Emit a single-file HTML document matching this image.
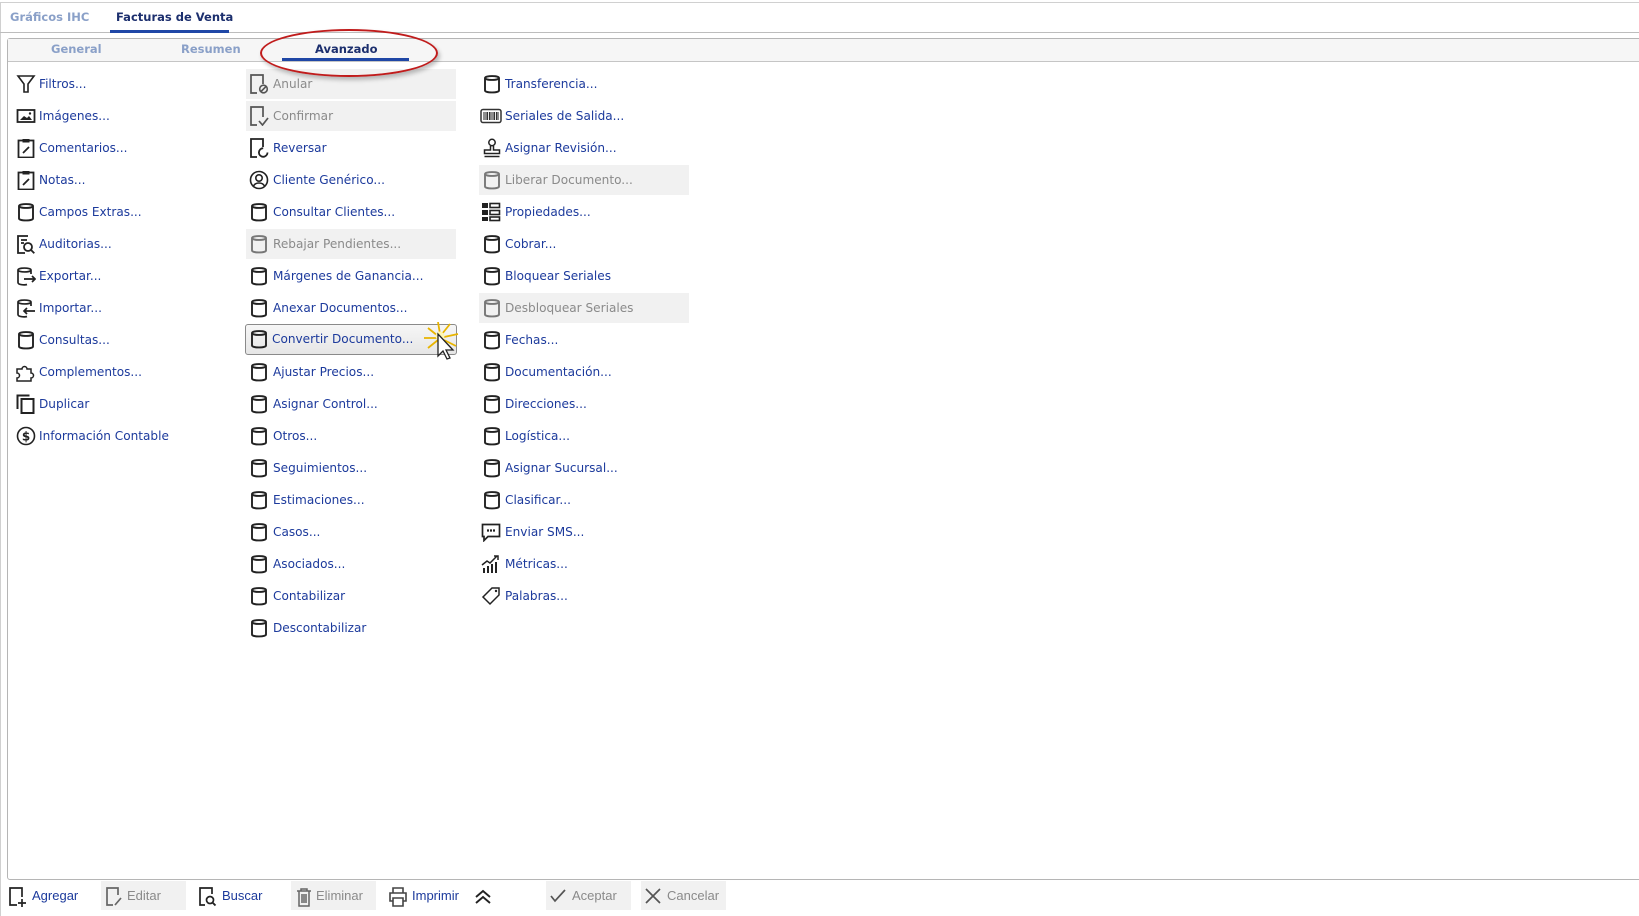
<!DOCTYPE html>
<html><head><meta charset="utf-8"><style>
body{margin:0;width:1639px;height:916px;background:#fff;position:relative;overflow:hidden;font-family:"DejaVu Sans","Liberation Sans",sans-serif;}
.a{position:absolute}
.it{position:absolute;height:30px;line-height:30px;font-size:12.1px;color:#1c3a9c;white-space:nowrap}
.it svg{position:absolute;left:0;top:5px}
.it span{position:absolute;left:23px}
.dis{color:#8a8a8a;background:#f1f1f1}
.tb{position:absolute;top:881px;height:29px;line-height:29px;font-family:"Liberation Sans",sans-serif;font-size:13px;color:#1c3a9c;white-space:nowrap}
.tb.g{background:#f1f1f1;color:#8a8a8a}
</style></head><body>
<svg width="0" height="0" style="position:absolute">
<defs>
<symbol id="db" viewBox="0 0 20 20"><path d="M3 4c0-2.6 14-2.6 14 0v12.5c0 2.6-14 2.6-14 0z M3 4c0 2.6 14 2.6 14 0" fill="none" stroke="currentColor" stroke-width="1.9"/></symbol>
</defs></svg>
<!-- top tabs -->
<div class="a" style="left:0;top:2px;width:1639px;height:1px;background:#d0d0d0"></div>
<div class="a" style="left:0;top:2px;width:1px;height:914px;background:#d0d0d0"></div>
<div class="a" style="left:0;top:32px;width:1639px;height:1px;background:#bdbdbd"></div>
<div class="a" style="left:10px;top:10px;font-size:11.5px;font-weight:bold;color:#8aa0c8">Gráficos IHC</div>
<div class="a" style="left:116px;top:10px;font-size:11.5px;font-weight:bold;color:#1c2f6e">Facturas de Venta</div>
<div class="a" style="left:110px;top:30px;width:119px;height:3px;background:#1f47a6"></div>
<!-- inner panel -->
<div class="a" style="left:7px;top:38px;width:1640px;height:840px;border:1px solid #b5b5b5;border-radius:3px"></div>
<div class="a" style="left:8px;top:39px;width:1639px;height:22px;background:#f6f6f6;border-bottom:1px solid #c5c5c5"></div>
<div class="a" style="left:51px;top:42px;font-size:11.5px;font-weight:bold;color:#8aa0c8">General</div>
<div class="a" style="left:181px;top:42px;font-size:11.5px;font-weight:bold;color:#8aa0c8">Resumen</div>
<div class="a" style="left:315px;top:42px;font-size:11.5px;font-weight:bold;color:#1c2f6e">Avanzado</div>
<div class="a" style="left:282px;top:58px;width:127px;height:3px;background:#1f47a6"></div>

<!-- column 1 -->
<div class="it" style="left:16px;top:69px"><svg width="20" height="20" viewBox="0 0 20 20"><path d="M2 2h16l-6 8v8h-4v-8z" fill="none" stroke="#222" stroke-width="1.6"/></svg><span>Filtros...</span></div>
<div class="it" style="left:16px;top:101px"><svg width="20" height="20" viewBox="0 0 20 20"><rect x="1.5" y="4" width="17" height="12" fill="none" stroke="#222" stroke-width="1.8"/><path d="M4 14l4-4 3 2 2-2 3 4z" fill="#222"/><circle cx="14" cy="7.5" r="1.2" fill="#222"/></svg><span>Imágenes...</span></div>
<div class="it" style="left:16px;top:133px"><svg width="20" height="20" viewBox="0 0 20 20"><rect x="2.5" y="2.5" width="15" height="17" fill="none" stroke="#222" stroke-width="1.8"/><rect x="6.5" y="1" width="7" height="3.5" fill="#222"/><path d="M7 15l6-6" stroke="#222" stroke-width="1.8"/></svg><span>Comentarios...</span></div>
<div class="it" style="left:16px;top:165px"><svg width="20" height="20" viewBox="0 0 20 20"><rect x="2.5" y="2.5" width="15" height="17" fill="none" stroke="#222" stroke-width="1.8"/><rect x="6.5" y="1" width="7" height="3.5" fill="#222"/><path d="M7 15l6-6" stroke="#222" stroke-width="1.8"/></svg><span>Notas...</span></div>
<div class="it" style="left:16px;top:197px"><svg width="20" height="20" style="color:#222"><use href="#db"/></svg><span>Campos Extras...</span></div>
<div class="it" style="left:16px;top:229px"><svg width="20" height="20" viewBox="0 0 20 20"><path d="M12 2H2v17h7" fill="none" stroke="#222" stroke-width="1.8"/><circle cx="12" cy="13" r="4" fill="none" stroke="#222" stroke-width="1.8"/><path d="M14.8 15.8l3.5 3.5M5 6h6M5 9h3" stroke="#222" stroke-width="1.8"/></svg><span>Auditorias...</span></div>
<div class="it" style="left:16px;top:261px"><svg width="20" height="20" viewBox="0 0 20 20"><path d="M15 8V4c0-2.6-13-2.6-13 0v12.5c0 2.6 7 2.6 9 2M2 4c0 2.6 13 2.6 13 0M8 13h11M16 10l3 3-3 3" fill="none" stroke="#222" stroke-width="1.7"/></svg><span>Exportar...</span></div>
<div class="it" style="left:16px;top:293px"><svg width="20" height="20" viewBox="0 0 20 20"><path d="M15 8V4c0-2.6-13-2.6-13 0v12.5c0 2.6 7 2.6 9 2M2 4c0 2.6 13 2.6 13 0M8 13h11M11 10l-3 3 3 3" fill="none" stroke="#222" stroke-width="1.7"/></svg><span>Importar...</span></div>
<div class="it" style="left:16px;top:325px"><svg width="20" height="20" style="color:#222"><use href="#db"/></svg><span>Consultas...</span></div>
<div class="it" style="left:16px;top:357px"><svg width="20" height="20" viewBox="0 0 20 20"><path d="M1 7h5a2.5 2.5 0 1 1 5 0h4v4a2.5 2.5 0 1 1 0 5v3H1v-3a2.5 2.5 0 1 0 0-5z" fill="none" stroke="#222" stroke-width="1.5"/></svg><span>Complementos...</span></div>
<div class="it" style="left:16px;top:389px"><svg width="20" height="20" viewBox="0 0 20 20"><path d="M1.5 15V1.5h12" fill="none" stroke="#222" stroke-width="2"/><rect x="5.5" y="5" width="12" height="14" fill="none" stroke="#222" stroke-width="2"/></svg><span>Duplicar</span></div>
<div class="it" style="left:16px;top:421px"><svg width="20" height="20" viewBox="0 0 20 20"><circle cx="10" cy="10" r="8.5" fill="none" stroke="#222" stroke-width="1.6"/><text x="10" y="14.5" font-size="12" font-weight="bold" text-anchor="middle" fill="#222" font-family="DejaVu Sans">$</text></svg><span>Información Contable</span></div>

<!-- column 2 -->
<div class="it dis" style="left:246px;top:69px;width:210px"><svg width="20" height="20" viewBox="0 0 20 20" style="left:3px"><path d="M8 19H2V1h12v9" fill="none" stroke="#555" stroke-width="1.7"/><circle cx="14.5" cy="15" r="3.8" fill="none" stroke="#555" stroke-width="1.6"/><path d="M12 17.5l5-5" stroke="#555" stroke-width="1.6"/></svg><span style="left:27px">Anular</span></div>
<div class="it dis" style="left:246px;top:101px;width:210px"><svg width="20" height="20" viewBox="0 0 20 20" style="left:3px"><path d="M8 19H2V1h12v10M10 15l3.5 4 5.5-7" fill="none" stroke="#555" stroke-width="1.7"/></svg><span style="left:27px">Confirmar</span></div>
<div class="it" style="left:246px;top:133px;width:210px"><svg width="20" height="20" viewBox="0 0 20 20" style="left:3px"><path d="M8 19H2V1h12v8M18.5 14.5a4.3 4.3 0 1 1-4.3-4.3" fill="none" stroke="#222" stroke-width="1.8"/></svg><span style="left:27px">Reversar</span></div>
<div class="it" style="left:246px;top:165px;width:210px"><svg width="20" height="20" viewBox="0 0 20 20" style="left:3px"><circle cx="10" cy="10" r="8.5" fill="none" stroke="#222" stroke-width="1.6"/><circle cx="10" cy="8" r="3.2" fill="none" stroke="#222" stroke-width="1.6"/><path d="M4.5 16c2-4 9-4 11 0" fill="none" stroke="#222" stroke-width="1.6"/></svg><span style="left:27px">Cliente Genérico...</span></div>
<div class="it" style="left:246px;top:197px;width:210px"><svg width="20" height="20" style="left:3px;color:#222"><use href="#db"/></svg><span style="left:27px">Consultar Clientes...</span></div>
<div class="it dis" style="left:246px;top:229px;width:210px"><svg width="20" height="20" style="left:3px;color:#777"><use href="#db"/></svg><span style="left:27px">Rebajar Pendientes...</span></div>
<div class="it" style="left:246px;top:261px;width:210px"><svg width="20" height="20" style="left:3px;color:#222"><use href="#db"/></svg><span style="left:27px">Márgenes de Ganancia...</span></div>
<div class="it" style="left:246px;top:293px;width:210px"><svg width="20" height="20" style="left:3px;color:#222"><use href="#db"/></svg><span style="left:27px">Anexar Documentos...</span></div>
<div class="it" style="left:245px;top:324px;width:212px;height:31px;border:1px solid #8a8a8a;border-radius:3px;background:linear-gradient(#f6f6f6,#e6e6e6);box-sizing:border-box;line-height:29px"><svg width="20" height="20" style="left:3px;top:4px;color:#222"><use href="#db"/></svg><span style="left:26px">Convertir Documento...</span></div>
<svg class="a" style="left:420px;top:322px" width="40" height="48" viewBox="0 0 40 48"><g stroke="#e8b400" stroke-width="1.8"><path d="M18 0l2 12M30 2l-8 10M38 12l-14 3M36 24l-12-6M8 6l10 8M4 16l14 0M8 26l10-8"/></g><circle cx="20" cy="14" r="4.5" fill="#fff6b0"/><path d="M18 12v22l5-5 4 8 3-1-4-8h7z" fill="#fff" stroke="#222" stroke-width="1.3"/></svg>
<div class="it" style="left:246px;top:357px;width:210px"><svg width="20" height="20" style="left:3px;color:#222"><use href="#db"/></svg><span style="left:27px">Ajustar Precios...</span></div>
<div class="it" style="left:246px;top:389px;width:210px"><svg width="20" height="20" style="left:3px;color:#222"><use href="#db"/></svg><span style="left:27px">Asignar Control...</span></div>
<div class="it" style="left:246px;top:421px;width:210px"><svg width="20" height="20" style="left:3px;color:#222"><use href="#db"/></svg><span style="left:27px">Otros...</span></div>
<div class="it" style="left:246px;top:453px;width:210px"><svg width="20" height="20" style="left:3px;color:#222"><use href="#db"/></svg><span style="left:27px">Seguimientos...</span></div>
<div class="it" style="left:246px;top:485px;width:210px"><svg width="20" height="20" style="left:3px;color:#222"><use href="#db"/></svg><span style="left:27px">Estimaciones...</span></div>
<div class="it" style="left:246px;top:517px;width:210px"><svg width="20" height="20" style="left:3px;color:#222"><use href="#db"/></svg><span style="left:27px">Casos...</span></div>
<div class="it" style="left:246px;top:549px;width:210px"><svg width="20" height="20" style="left:3px;color:#222"><use href="#db"/></svg><span style="left:27px">Asociados...</span></div>
<div class="it" style="left:246px;top:581px;width:210px"><svg width="20" height="20" style="left:3px;color:#222"><use href="#db"/></svg><span style="left:27px">Contabilizar</span></div>
<div class="it" style="left:246px;top:613px;width:210px"><svg width="20" height="20" style="left:3px;color:#222"><use href="#db"/></svg><span style="left:27px">Descontabilizar</span></div>

<!-- column 3 -->
<div class="it" style="left:479px;top:69px;width:210px"><svg width="20" height="20" style="left:3px;color:#222"><use href="#db"/></svg><span style="left:26px">Transferencia...</span></div>
<div class="it" style="left:479px;top:101px;width:210px"><svg width="22" height="20" viewBox="0 0 22 20" style="left:1px"><rect x="1" y="3.5" width="20" height="13" rx="2" fill="none" stroke="#333" stroke-width="1.5"/><path d="M4 6v8M6 6v8M7.5 6v8M9.5 6v8M11 6v8M13 6v8M14.5 6v8M16.5 6v8M18 6v8" stroke="#333" stroke-width="1.1"/></svg><span style="left:26px">Seriales de Salida...</span></div>
<div class="it" style="left:479px;top:133px;width:210px"><svg width="20" height="20" viewBox="0 0 20 20" style="left:3px"><circle cx="10" cy="4.5" r="3.2" fill="none" stroke="#222" stroke-width="1.5"/><path d="M8.5 8v4H2.5v3.5h15V12h-6V8M2.5 18.5h15" fill="none" stroke="#222" stroke-width="1.5"/></svg><span style="left:26px">Asignar Revisión...</span></div>
<div class="it dis" style="left:479px;top:165px;width:210px"><svg width="20" height="20" style="left:3px;color:#777"><use href="#db"/></svg><span style="left:26px">Liberar Documento...</span></div>
<div class="it" style="left:479px;top:197px;width:210px"><svg width="20" height="20" viewBox="0 0 20 20" style="left:2px"><g fill="#222"><rect x="1" y="1" width="6" height="5"/><rect x="1" y="8" width="6" height="5"/><rect x="1" y="15" width="6" height="4"/></g><g fill="none" stroke="#222" stroke-width="1.6"><rect x="9" y="1.5" width="9.5" height="4"/><rect x="9" y="8.5" width="9.5" height="4"/><rect x="9" y="15" width="9.5" height="3.5"/></g></svg><span style="left:26px">Propiedades...</span></div>
<div class="it" style="left:479px;top:229px;width:210px"><svg width="20" height="20" style="left:3px;color:#222"><use href="#db"/></svg><span style="left:26px">Cobrar...</span></div>
<div class="it" style="left:479px;top:261px;width:210px"><svg width="20" height="20" style="left:3px;color:#222"><use href="#db"/></svg><span style="left:26px">Bloquear Seriales</span></div>
<div class="it dis" style="left:479px;top:293px;width:210px"><svg width="20" height="20" style="left:3px;color:#777"><use href="#db"/></svg><span style="left:26px">Desbloquear Seriales</span></div>
<div class="it" style="left:479px;top:325px;width:210px"><svg width="20" height="20" style="left:3px;color:#222"><use href="#db"/></svg><span style="left:26px">Fechas...</span></div>
<div class="it" style="left:479px;top:357px;width:210px"><svg width="20" height="20" style="left:3px;color:#222"><use href="#db"/></svg><span style="left:26px">Documentación...</span></div>
<div class="it" style="left:479px;top:389px;width:210px"><svg width="20" height="20" style="left:3px;color:#222"><use href="#db"/></svg><span style="left:26px">Direcciones...</span></div>
<div class="it" style="left:479px;top:421px;width:210px"><svg width="20" height="20" style="left:3px;color:#222"><use href="#db"/></svg><span style="left:26px">Logística...</span></div>
<div class="it" style="left:479px;top:453px;width:210px"><svg width="20" height="20" style="left:3px;color:#222"><use href="#db"/></svg><span style="left:26px">Asignar Sucursal...</span></div>
<div class="it" style="left:479px;top:485px;width:210px"><svg width="20" height="20" style="left:3px;color:#222"><use href="#db"/></svg><span style="left:26px">Clasificar...</span></div>
<div class="it" style="left:479px;top:517px;width:210px"><svg width="20" height="20" viewBox="0 0 20 20" style="left:2px"><path d="M1.5 2.5h17v12H7l-4 4v-4H1.5z" fill="none" stroke="#222" stroke-width="1.7"/><path d="M6 8.5h2M9 8.5h2M12 8.5h2" stroke="#222" stroke-width="2.2"/></svg><span style="left:26px">Enviar SMS...</span></div>
<div class="it" style="left:479px;top:549px;width:210px"><svg width="20" height="20" viewBox="0 0 20 20" style="left:2px"><g fill="#222"><rect x="2" y="14" width="2" height="5"/><rect x="6" y="12" width="2" height="7"/><rect x="10" y="10" width="2" height="9"/><rect x="14" y="8" width="2" height="11"/></g><path d="M1 11l5-4 3 2 7-7M13 2h4v4" fill="none" stroke="#222" stroke-width="1.5"/></svg><span style="left:26px">Métricas...</span></div>
<div class="it" style="left:479px;top:581px;width:210px"><svg width="20" height="20" viewBox="0 0 20 20" style="left:2px"><path d="M11 2h7v7l-9 9-7-7z" fill="none" stroke="#222" stroke-width="1.5"/><circle cx="15" cy="5" r="1.2" fill="#222"/></svg><span style="left:26px">Palabras...</span></div>

<!-- red ellipse on top -->
<div class="a" style="left:260px;top:29px;width:174px;height:44px;border:2px solid #c01c1c;border-radius:50%/50%;box-shadow:2px 3px 4px rgba(0,0,0,.25);z-index:5"></div>

<!-- bottom toolbar -->
<div class="tb" style="left:8px;width:80px"><svg class="a" style="left:0;top:5px" width="20" height="22" viewBox="0 0 20 22"><path d="M9 19H2V2h12v9M14 13v8M10 17h8" fill="none" stroke="#222" stroke-width="1.7"/></svg><span class="a" style="left:24px">Agregar</span></div>
<div class="tb g" style="left:101px;width:85px"><svg class="a" style="left:3px;top:5px" width="20" height="22" viewBox="0 0 20 22"><path d="M9 19H3V2h11v7M11 19l6-7" fill="none" stroke="#666" stroke-width="1.7"/></svg><span class="a" style="left:26px">Editar</span></div>
<div class="tb" style="left:198px;width:70px"><svg class="a" style="left:0;top:5px" width="20" height="22" viewBox="0 0 20 22"><path d="M7 19H2V2h12v6" fill="none" stroke="#222" stroke-width="1.7"/><circle cx="12" cy="14" r="3.5" fill="none" stroke="#222" stroke-width="1.7"/><path d="M14.5 16.5l3 3" stroke="#222" stroke-width="1.9"/></svg><span class="a" style="left:24px">Buscar</span></div>
<div class="tb g" style="left:291px;width:85px"><svg class="a" style="left:3px;top:5px" width="20" height="22" viewBox="0 0 20 22"><path d="M3 5h14M7 5V3h6v2M5 5v15h10V5M8 8v9M10 8v9M12 8v9" fill="none" stroke="#666" stroke-width="1.5"/></svg><span class="a" style="left:25px">Eliminar</span></div>
<div class="tb" style="left:388px;width:100px"><svg class="a" style="left:0;top:5px" width="20" height="22" viewBox="0 0 20 22"><path d="M5 7V2h10v5M5 15H2V7h16v8h-3M5 12h10v8H5z" fill="none" stroke="#444" stroke-width="1.6"/></svg><span class="a" style="left:24px">Imprimir</span><svg class="a" style="left:86px;top:6px" width="18" height="18" viewBox="0 0 18 18"><path d="M2 10l7-6 7 6M2 16l7-6 7 6" fill="none" stroke="#222" stroke-width="1.9"/></svg></div>
<div class="tb g" style="left:546px;width:85px"><svg class="a" style="left:3px;top:6px" width="18" height="18" viewBox="0 0 18 18"><path d="M2 9l4 5 10-11" fill="none" stroke="#555" stroke-width="1.7"/></svg><span class="a" style="left:26px">Aceptar</span></div>
<div class="tb g" style="left:641px;width:85px"><svg class="a" style="left:3px;top:6px" width="18" height="18" viewBox="0 0 18 18"><path d="M2 2l14 14M16 2L2 16" fill="none" stroke="#555" stroke-width="1.7"/></svg><span class="a" style="left:26px">Cancelar</span></div>
</body></html>
